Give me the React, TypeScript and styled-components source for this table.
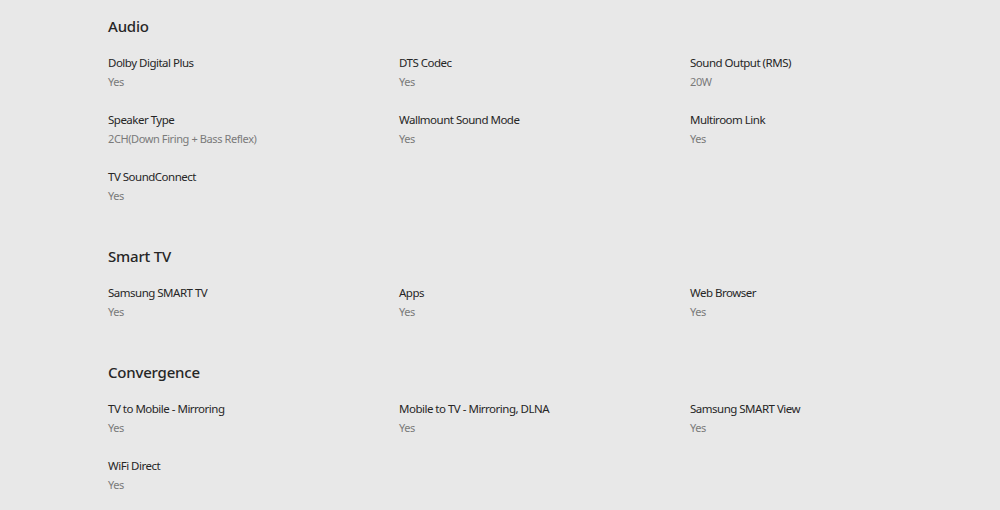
import React from 'react';
import styled, { createGlobalStyle } from 'styled-components';

const GlobalStyle = createGlobalStyle({
  body: {
    background: '#e8e8e8',
    margin: 0,
  },
  '*': {
    boxSizing: 'border-box',
  },
});

const specs = [
  {
    title: 'Audio',
    items: [
      ['Dolby Digital Plus', 'Yes'],
      ['DTS Codec', 'Yes'],
      ['Sound Output (RMS)', '20W'],
      ['Speaker Type', '2CH(Down Firing + Bass Reflex)'],
      ['Wallmount Sound Mode', 'Yes'],
      ['Multiroom Link', 'Yes'],
      ['TV SoundConnect', 'Yes'],
    ],
  },
  {
    title: 'Smart TV',
    items: [
      ['Samsung SMART TV', 'Yes'],
      ['Apps', 'Yes'],
      ['Web Browser', 'Yes'],
    ],
  },
  {
    title: 'Convergence',
    items: [
      ['TV to Mobile - Mirroring', 'Yes'],
      ['Mobile to TV - Mirroring, DLNA', 'Yes'],
      ['Samsung SMART View', 'Yes'],
      ['WiFi Direct', 'Yes'],
    ],
  },
];

const Page = styled.div({
  display: 'flex',
  flexDirection: 'column',
  fontFamily: '"Noto Sans", "Open Sans", sans-serif',
  gap: 41,
  padding: '16px 0 0 108px',
  width: 1000,
});

const Section = styled.section({
  display: 'flex',
  flexDirection: 'column',
  gap: 18,
});

const Title = styled.h2({
  color: '#262626',
  fontSize: 15,
  fontWeight: 500,
  letterSpacing: '-0.2px',
  lineHeight: '20px',
  margin: 0,
});

const Grid = styled.div({
  display: 'grid',
  gridTemplateColumns: 'repeat(3, 291px)',
  rowGap: 20,
});

const Item = styled.div({
  display: 'flex',
  flexDirection: 'column',
  gap: 1,
});

const Label = styled.div({
  color: '#262626',
  fontSize: 11.5,
  letterSpacing: '-0.5px',
  lineHeight: '18px',
});

const Value = styled.div({
  color: '#7a7a7a',
  fontSize: 11,
  letterSpacing: '-0.4px',
  lineHeight: '18px',
});

const App = () => (
  <Page>
    <GlobalStyle />
    {specs.map((section) => (
      <Section key={section.title}>
        <Title>{section.title}</Title>
        <Grid>
          {section.items.map(([label, value]) => (
            <Item key={label}>
              <Label>{label}</Label>
              <Value>{value}</Value>
            </Item>
          ))}
        </Grid>
      </Section>
    ))}
  </Page>
);

export default App;
